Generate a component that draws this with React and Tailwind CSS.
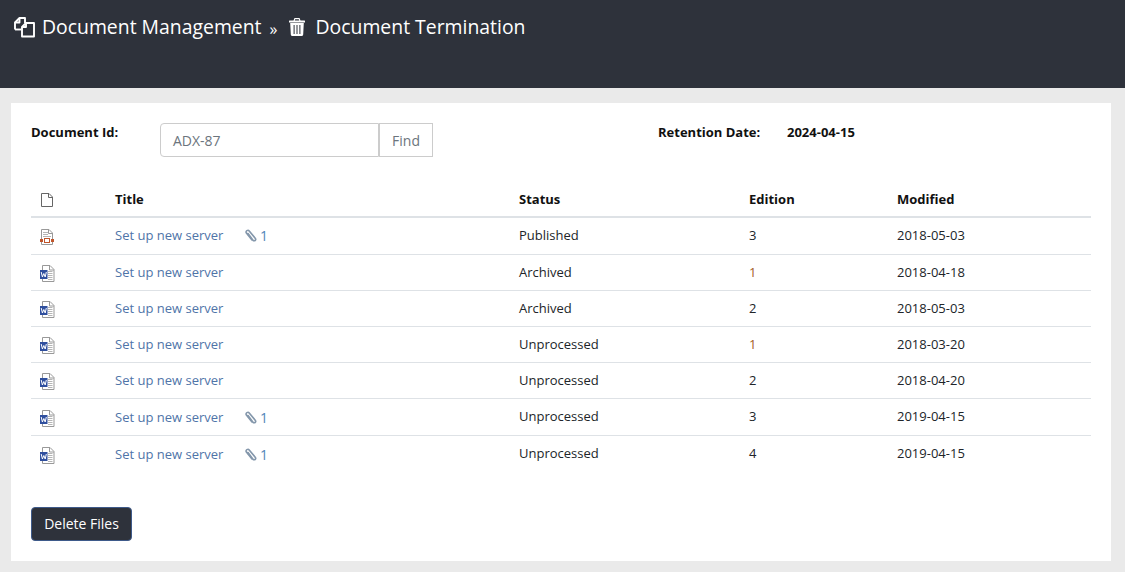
const rows = [
  { icon: "ppt", clip: true, status: "Published", ed: "3", date: "2018-05-03", h: "h-[37px]" },
  { icon: "word", status: "Archived", ed: "1", orange: true, date: "2018-04-18", h: "h-[36px]" },
  { icon: "word", status: "Archived", ed: "2", date: "2018-05-03", h: "h-[36px]" },
  { icon: "word", status: "Unprocessed", ed: "1", orange: true, date: "2018-03-20", h: "h-[36px]" },
  { icon: "word", status: "Unprocessed", ed: "2", date: "2018-04-20", h: "h-[36px]" },
  { icon: "word", clip: true, titlePad: "pt-[2px]", status: "Unprocessed", ed: "3", date: "2019-04-15", h: "h-[37px]" },
  { icon: "word", clip: true, restPad: "pb-[2px]", status: "Unprocessed", ed: "4", date: "2019-04-15", h: "h-[37px]", last: true },
];

function DocsIcon() {
  return (
    <svg width="21" height="21" viewBox="0 0 21 21" fill="none" stroke="#fff" strokeWidth="1.9" strokeLinejoin="round">
      <path d="M1 12.5V5.5L5.5 1H11V6" />
      <path d="M5.5 1.5V5.5H1.5" />
      <path d="M1 12.5H7" />
      <path d="M8 19.5V10L12 6H20V19.5Z" />
      <path d="M12 6.5V10H8.5" />
    </svg>
  );
}

function TrashIcon() {
  return (
    <svg width="16" height="18" viewBox="0 0 16 18" fill="#fff">
      <path d="M5.5 0H10.5L11.5 2.5H15.5C15.9 2.5 16 2.8 16 3V4.4H0V3C0 2.8.1 2.5.5 2.5H4.5ZM6.2 1.2 5.8 2.5H10.2L9.8 1.2Z" />
      <path d="M1.2 5H14.8L14.2 16.5C14.1 17.4 13.5 18 12.7 18H3.3C2.5 18 1.9 17.4 1.8 16.5ZM4.6 7V16H5.6V7ZM7.5 7V16H8.5V7ZM10.4 7V16H11.4V7Z" fillRule="evenodd" />
    </svg>
  );
}

function BlankDoc() {
  return (
    <svg width="12" height="14" viewBox="0 0 12 14" fill="none" stroke="#666" strokeWidth="1">
      <path d="M.5.5H8L11.5 4V13.5H.5Z" />
      <path d="M7.5.5V4.5H11.5" />
    </svg>
  );
}

function Lines({ x1, x2, ys }) {
  return ys.map((y) => <path key={y} d={`M${x1} ${y}H${x2}`} stroke="#b5b5b5" strokeWidth="1" />);
}

function PptIcon() {
  return (
    <svg width="14" height="17" viewBox="0 0 14 17" fill="none">
      <path d="M1.5.5H9L12.5 4V15.5H1.5Z" fill="#fff" stroke="#999" />
      <path d="M8.5.5V4.5H12.5" stroke="#999" />
      <Lines x1={3} x2={8} ys={[3.5, 5.5]} />
      <Lines x1={3} x2={11} ys={[7.5]} />
      <rect x="4.5" y="9.5" width="5" height="4" fill="#fff" stroke="#c0552b" />
      <rect x="0" y="10" width="3" height="3" fill="#c0552b" />
      <rect x="11" y="10" width="3" height="3" fill="#c0552b" />
    </svg>
  );
}

function WordIcon() {
  return (
    <svg width="15" height="17" viewBox="0 0 15 17" fill="none">
      <path d="M2.5.5H10L14 4.5V16.5H2.5Z" fill="#fff" stroke="#999" />
      <path d="M9.5.5V5H14" stroke="#999" />
      <Lines x1={8} x2={12.5} ys={[6.5, 8.5, 10.5, 12.5, 14.5]} />
      <rect x="0" y="5" width="7.5" height="9" fill="#2f4f9e" />
      <path d="M1.2 7 2.4 12 3.8 8.5 5.2 12 6.3 7" stroke="#fff" strokeWidth="1" />
    </svg>
  );
}

function Clip() {
  return (
    <svg width="13" height="14" viewBox="0 0 13 14" fill="none" stroke="#8497ab" strokeWidth="1.6" strokeLinecap="round">
      <path d="M4 4.5 9 11.2C10.2 12.8 12.6 11 11.4 9.4L5.2 1.9C4 .4 1.2 2 2.4 4L8 11" />
    </svg>
  );
}

export default function App() {
  return (
    <div className="min-h-[572px] bg-[#eaeaea] font-['Open_Sans',sans-serif]">
      <header className="h-[88px] bg-[#2e323b] pl-[14px] pt-[15px]">
        <div className="flex h-6 items-center text-[19.4px] leading-6 text-white">
          <DocsIcon />
          <span className="ml-[7px]">Document Management</span>
          <span className="ml-[8px] mt-[3px] text-[16px]">»</span>
          <span className="ml-[12px] flex"><TrashIcon /></span>
          <span className="ml-[10px]">Document Termination</span>
        </div>
      </header>

      <main className="ml-[11px] mr-[14px] mt-[15px] h-[458px] bg-white px-5 pt-5">
        <div className="flex items-start text-[13px] text-[#111]">
          <div className="w-[129px] text-[13px] font-bold leading-[18px]">Document Id:</div>
          <div className="flex h-[34px] w-[273px] text-[14px]">
            <div className="flex w-[219px] items-center rounded-l-[4px] border border-[#ccc] pl-3 text-[#6c757d]">ADX-87</div>
            <div className="flex w-[54px] items-center justify-center border border-[#ccc] text-[#6c757d]">Find</div>
          </div>
          <div className="ml-[225px] w-[129px] font-bold leading-[18px]">Retention Date:</div>
          <div className="font-bold leading-[18px]">2024-04-15</div>
        </div>

        <div className="mt-[25px] flex h-[36px] items-center border-b-2 border-[#dee2e6] pt-[2px] text-[13px] font-bold text-[#111]">
          <div className="w-[84px] pl-[10px]"><BlankDoc /></div>
          <div className="w-[404px]">Title</div>
          <div className="w-[230px]">Status</div>
          <div className="w-[148px]">Edition</div>
          <div>Modified</div>
        </div>

        {rows.map((r, i) => (
          <div key={i} className={`flex items-center text-[13px] text-[#212529] ${r.h} ${r.last ? "" : "border-b border-[#dee2e6]"}`}>
            <div className="flex w-[84px] pl-[9px] pt-[2px]">{r.icon === "ppt" ? <PptIcon /> : <WordIcon />}</div>
            <div className={`flex w-[404px] items-center text-[#4f74a8] ${r.titlePad || ""}`}>
              <span className="w-[129px]">Set up new server</span>
              {r.clip && (
                <span className="flex items-center gap-[3px] text-[14px] leading-none text-[#4f85b8]"><Clip />1</span>
              )}
            </div>
            <div className={`w-[230px] ${r.restPad || ""}`}>{r.status}</div>
            <div className={`w-[148px] ${r.restPad || ""} ${r.orange ? "text-[#a5601f]" : ""}`}>{r.ed}</div>
            <div className={r.restPad || ""}>{r.date}</div>
          </div>
        ))}

        <button className="mt-[34px] flex h-[34px] w-[101px] items-center justify-center rounded-[4px] border border-[#3e5a8a] bg-[#2e323b] pb-[2px] text-[14px] text-white">
          Delete Files
        </button>
      </main>
    </div>
  );
}
